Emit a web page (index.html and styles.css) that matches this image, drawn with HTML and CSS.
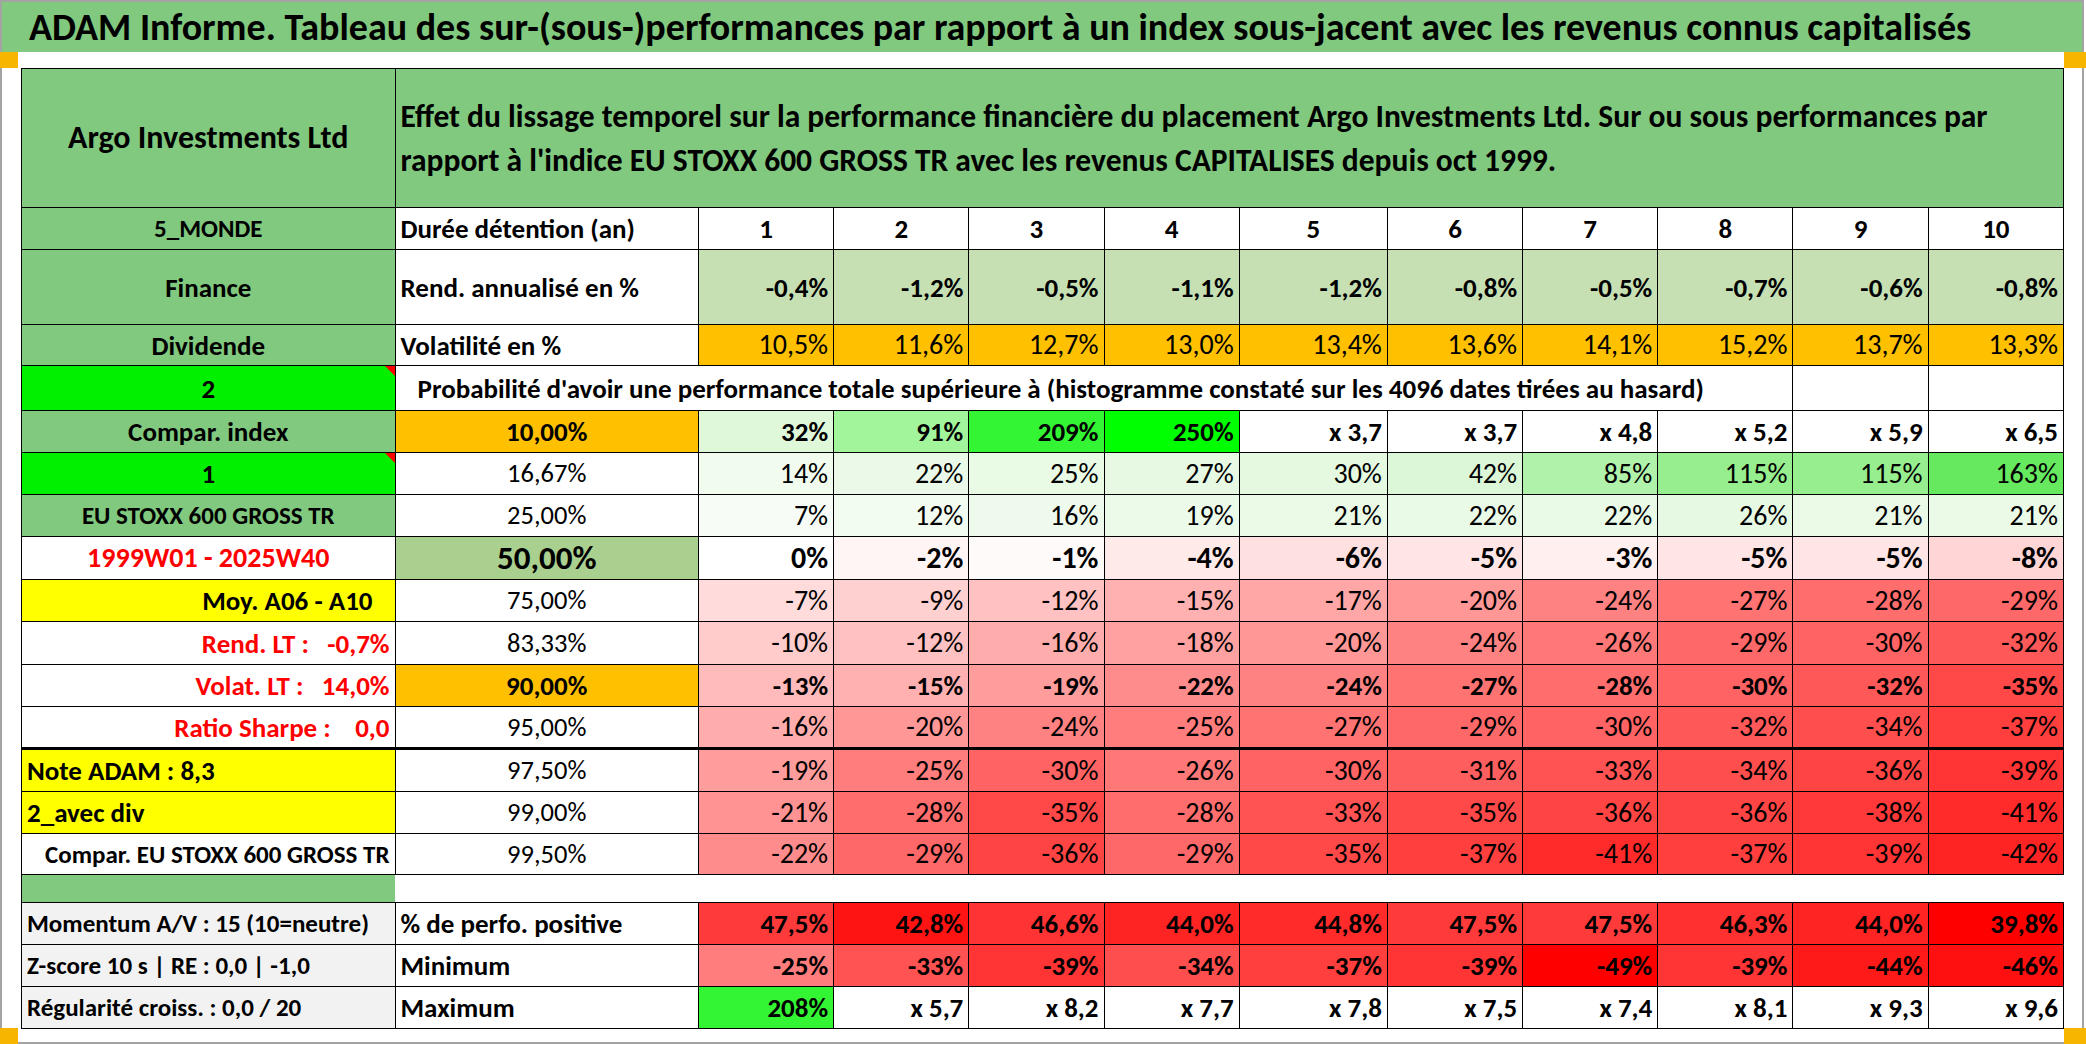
FILE: index.html
```html
<!DOCTYPE html>
<html lang="fr">
<head>
<meta charset="utf-8">
<title>ADAM Informe</title>
<link rel="stylesheet" href="styles.css">
</head>
<body>
<div class="sheet">
  <div class="title">ADAM Informe. Tableau des sur-(sous-)performances par rapport à un index sous-jacent avec les revenus connus capitalisés</div>
  <table class="grid">
    <colgroup>
      <col class="w-label"><col class="w-sub">
      <col class="w-d"><col class="w-d"><col class="w-d"><col class="w-d"><col class="w-d5">
      <col class="w-d"><col class="w-d"><col class="w-d"><col class="w-d"><col class="w-d">
    </colgroup>
    <tr class="h-head">
      <td class="g c b big">Argo Investments Ltd</td>
      <td colspan="11" class="g l b intro">Effet du lissage temporel sur la performance financière du placement Argo Investments Ltd. Sur ou sous performances par<br>rapport à l'indice EU STOXX 600 GROSS TR avec les revenus CAPITALISES depuis oct 1999.</td>
    </tr>
    <tr class="h42">
      <td class="g c b mid">5_MONDE</td>
      <td class="l b">Durée détention (an)</td>
      <td class="c b">1</td><td class="c b">2</td><td class="c b">3</td><td class="c b">4</td><td class="c b">5</td>
      <td class="c b">6</td><td class="c b">7</td><td class="c b">8</td><td class="c b">9</td><td class="c b">10</td>
    </tr>
    <tr class="h75">
      <td class="g c b">Finance</td>
      <td class="l b">Rend. annualisé en %</td>
      <td class="lg r b">-0,4%</td><td class="lg r b">-1,2%</td><td class="lg r b">-0,5%</td><td class="lg r b">-1,1%</td><td class="lg r b">-1,2%</td>
      <td class="lg r b">-0,8%</td><td class="lg r b">-0,5%</td><td class="lg r b">-0,7%</td><td class="lg r b">-0,6%</td><td class="lg r b">-0,8%</td>
    </tr>
    <tr class="h41">
      <td class="g c b">Dividende</td>
      <td class="l b">Volatilité en %</td>
      <td class="or r n">10,5%</td><td class="or r n">11,6%</td><td class="or r n">12,7%</td><td class="or r n">13,0%</td><td class="or r n">13,4%</td>
      <td class="or r n">13,6%</td><td class="or r n">14,1%</td><td class="or r n">15,2%</td><td class="or r n">13,7%</td><td class="or r n">13,3%</td>
    </tr>
    <tr class="h45">
      <td class="bg c b tri">2</td>
      <td colspan="9" class="l b prob">Probabilité d'avoir une performance totale supérieure à (histogramme constaté sur les 4096 dates tirées au hasard)</td>
      <td></td><td></td>
    </tr>
    <tr class="h42">
      <td class="g c b">Compar. index</td>
      <td class="or c b">10,00%</td>
      <td class="r b" style="background:#e0f8da">32%</td><td class="r b" style="background:#a3f59c">91%</td><td class="r b" style="background:#33f533">209%</td><td class="r b" style="background:#00ff00">250%</td>
      <td class="r b">x 3,7</td><td class="r b">x 3,7</td><td class="r b">x 4,8</td><td class="r b">x 5,2</td><td class="r b">x 5,9</td><td class="r b">x 6,5</td>
    </tr>
    <tr class="h42">
      <td class="bg c b tri">1</td>
      <td class="c pc">16,67%</td>
      <td class="r n" style="background:#f1fcef">14%</td><td class="r n" style="background:#ebfae8">22%</td><td class="r n" style="background:#e9fae5">25%</td><td class="r n" style="background:#e7f9e3">27%</td><td class="r n" style="background:#e5f9e1">30%</td>
      <td class="r n" style="background:#dcf7d7">42%</td><td class="r n" style="background:#b1f2aa">85%</td><td class="r n" style="background:#97ee8f">115%</td><td class="r n" style="background:#97ee8f">115%</td><td class="r n" style="background:#66e85f">163%</td>
    </tr>
    <tr class="h42">
      <td class="g c b small">EU STOXX 600 GROSS TR</td>
      <td class="c pc">25,00%</td>
      <td class="r n" style="background:#f7fdf6">7%</td><td class="r n" style="background:#f2fcf0">12%</td><td class="r n" style="background:#eefbec">16%</td><td class="r n" style="background:#ecfbe9">19%</td><td class="r n" style="background:#eafae7">21%</td>
      <td class="r n" style="background:#e9fae6">22%</td><td class="r n" style="background:#e9fae6">22%</td><td class="r n" style="background:#e6f9e3">26%</td><td class="r n" style="background:#eafae7">21%</td><td class="r n" style="background:#eafae7">21%</td>
    </tr>
    <tr class="h43">
      <td class="c b red period">1999W01 - 2025W40</td>
      <td class="mg c b pbig">50,00%</td>
      <td class="r b dbig">0%</td><td class="r b dbig" style="background:#fff5f5">-2%</td><td class="r b dbig" style="background:#fffafa">-1%</td><td class="r b dbig" style="background:#ffeaea">-4%</td><td class="r b dbig" style="background:#ffe0e0">-6%</td>
      <td class="r b dbig" style="background:#ffe5e5">-5%</td><td class="r b dbig" style="background:#ffefef">-3%</td><td class="r b dbig" style="background:#ffe5e5">-5%</td><td class="r b dbig" style="background:#ffe5e5">-5%</td><td class="r b dbig" style="background:#ffd5d5">-8%</td>
    </tr>
    <tr class="h42">
      <td class="ye r b moy">Moy. A06 - A10</td>
      <td class="c pc">75,00%</td>
      <td class="r n" style="background:#ffdbdb">-7%</td><td class="r n" style="background:#ffd0d0">-9%</td><td class="r n" style="background:#ffc1c1">-12%</td><td class="r n" style="background:#ffb1b1">-15%</td><td class="r n" style="background:#ffa7a7">-17%</td>
      <td class="r n" style="background:#ff9797">-20%</td><td class="r n" style="background:#ff8282">-24%</td><td class="r n" style="background:#ff7373">-27%</td><td class="r n" style="background:#ff6d6d">-28%</td><td class="r n" style="background:#ff6868">-29%</td>
    </tr>
    <tr class="h43">
      <td class="r b red">Rend. LT :&nbsp;&nbsp;&nbsp;-0,7%</td>
      <td class="c pc">83,33%</td>
      <td class="r n" style="background:#ffcbcb">-10%</td><td class="r n" style="background:#ffc1c1">-12%</td><td class="r n" style="background:#ffacac">-16%</td><td class="r n" style="background:#ffa1a1">-18%</td><td class="r n" style="background:#ff9797">-20%</td>
      <td class="r n" style="background:#ff8282">-24%</td><td class="r n" style="background:#ff7878">-26%</td><td class="r n" style="background:#ff6868">-29%</td><td class="r n" style="background:#ff6363">-30%</td><td class="r n" style="background:#ff5858">-32%</td>
    </tr>
    <tr class="h42">
      <td class="r b red">Volat. LT :&nbsp;&nbsp;&nbsp;14,0%</td>
      <td class="or c b">90,00%</td>
      <td class="r b" style="background:#ffbbbb">-13%</td><td class="r b" style="background:#ffb1b1">-15%</td><td class="r b" style="background:#ff9c9c">-19%</td><td class="r b" style="background:#ff8c8c">-22%</td><td class="r b" style="background:#ff8282">-24%</td>
      <td class="r b" style="background:#ff7373">-27%</td><td class="r b" style="background:#ff6d6d">-28%</td><td class="r b" style="background:#ff6363">-30%</td><td class="r b" style="background:#ff5858">-32%</td><td class="r b" style="background:#ff4949">-35%</td>
    </tr>
    <tr class="h42 thick">
      <td class="r b red">Ratio Sharpe :&nbsp;&nbsp;&nbsp;&nbsp;0,0</td>
      <td class="c pc">95,00%</td>
      <td class="r n" style="background:#ffacac">-16%</td><td class="r n" style="background:#ff9797">-20%</td><td class="r n" style="background:#ff8282">-24%</td><td class="r n" style="background:#ff7d7d">-25%</td><td class="r n" style="background:#ff7373">-27%</td>
      <td class="r n" style="background:#ff6868">-29%</td><td class="r n" style="background:#ff6363">-30%</td><td class="r n" style="background:#ff5858">-32%</td><td class="r n" style="background:#ff4e4e">-34%</td><td class="r n" style="background:#ff3e3e">-37%</td>
    </tr>
    <tr class="h43">
      <td class="ye l b">Note ADAM : 8,3</td>
      <td class="c pc">97,50%</td>
      <td class="r n" style="background:#ff9c9c">-19%</td><td class="r n" style="background:#ff7d7d">-25%</td><td class="r n" style="background:#ff6363">-30%</td><td class="r n" style="background:#ff7878">-26%</td><td class="r n" style="background:#ff6363">-30%</td>
      <td class="r n" style="background:#ff5e5e">-31%</td><td class="r n" style="background:#ff5353">-33%</td><td class="r n" style="background:#ff4e4e">-34%</td><td class="r n" style="background:#ff4444">-36%</td><td class="r n" style="background:#ff3434">-39%</td>
    </tr>
    <tr class="h42">
      <td class="ye l b">2_avec div</td>
      <td class="c pc">99,00%</td>
      <td class="r n" style="background:#ff9292">-21%</td><td class="r n" style="background:#ff6d6d">-28%</td><td class="r n" style="background:#ff4949">-35%</td><td class="r n" style="background:#ff6d6d">-28%</td><td class="r n" style="background:#ff5353">-33%</td>
      <td class="r n" style="background:#ff4949">-35%</td><td class="r n" style="background:#ff4444">-36%</td><td class="r n" style="background:#ff4444">-36%</td><td class="r n" style="background:#ff3939">-38%</td><td class="r n" style="background:#ff2a2a">-41%</td>
    </tr>
    <tr class="h41">
      <td class="r b small">Compar. EU STOXX 600 GROSS TR</td>
      <td class="c pc">99,50%</td>
      <td class="r n" style="background:#ff8c8c">-22%</td><td class="r n" style="background:#ff6868">-29%</td><td class="r n" style="background:#ff4444">-36%</td><td class="r n" style="background:#ff6868">-29%</td><td class="r n" style="background:#ff4949">-35%</td>
      <td class="r n" style="background:#ff3e3e">-37%</td><td class="r n" style="background:#ff2a2a">-41%</td><td class="r n" style="background:#ff3e3e">-37%</td><td class="r n" style="background:#ff3434">-39%</td><td class="r n" style="background:#ff2424">-42%</td>
    </tr>
    <tr class="h28">
      <td class="g gap"></td>
      <td colspan="11" class="void"></td>
    </tr>
    <tr class="h42">
      <td class="gr l b stat">Momentum A/V : 15 (10=neutre)</td>
      <td class="l b">% de perfo. positive</td>
      <td class="r b" style="background:#ff3a3a">47,5%</td><td class="r b" style="background:#ff1414">42,8%</td><td class="r b" style="background:#ff3333">46,6%</td><td class="r b" style="background:#ff2424">44,0%</td><td class="r b" style="background:#ff2b2b">44,8%</td>
      <td class="r b" style="background:#ff3a3a">47,5%</td><td class="r b" style="background:#ff3a3a">47,5%</td><td class="r b" style="background:#ff3030">46,3%</td><td class="r b" style="background:#ff2424">44,0%</td><td class="r b" style="background:#ff0000">39,8%</td>
    </tr>
    <tr class="h42">
      <td class="gr l b stat">Z-score 10 s | RE : 0,0 | -1,0</td>
      <td class="l b">Minimum</td>
      <td class="r b" style="background:#ff7d7d">-25%</td><td class="r b" style="background:#ff5353">-33%</td><td class="r b" style="background:#ff3434">-39%</td><td class="r b" style="background:#ff4e4e">-34%</td><td class="r b" style="background:#ff3e3e">-37%</td>
      <td class="r b" style="background:#ff3434">-39%</td><td class="r b" style="background:#ff0000">-49%</td><td class="r b" style="background:#ff3434">-39%</td><td class="r b" style="background:#ff1a1a">-44%</td><td class="r b" style="background:#ff1010">-46%</td>
    </tr>
    <tr class="h42">
      <td class="gr l b stat">Régularité croiss. : 0,0 / 20</td>
      <td class="l b">Maximum</td>
      <td class="r b" style="background:#33f533">208%</td><td class="r b">x 5,7</td><td class="r b">x 8,2</td><td class="r b">x 7,7</td><td class="r b">x 7,8</td>
      <td class="r b">x 7,5</td><td class="r b">x 7,4</td><td class="r b">x 8,1</td><td class="r b">x 9,3</td><td class="r b">x 9,6</td>
    </tr>
  </table>
  <span class="handle h-tl"></span>
  <span class="handle h-tr"></span>
  <span class="handle h-bl"></span>
  <span class="handle h-br"></span>
</div>
</body>
</html>
```

FILE: styles.css
```css
html, body {
  margin: 0;
  padding: 0;
  background: #ffffff;
}

body {
  font-family: Carlito, Lato, "Liberation Sans", sans-serif;
  color: #000;
}

.sheet {
  position: relative;
  width: 2084px;
  height: 1044px;
  box-sizing: border-box;
  border: 2px solid #a3a3a3;
  background: #fff;
}

.title {
  height: 50px;
  background: #80c97f;
  font-size: 38px;
  font-weight: 700;
  line-height: 50px;
  padding-left: 27px;
  white-space: nowrap;
  overflow: hidden;
}

.grid {
  margin: 16px 0 0 19px;
  border-collapse: collapse;
  table-layout: fixed;
  width: 2043px;
}

.w-label { width: 373px; }
.w-sub { width: 303px; }
.w-d { width: 135px; }
.w-d5 { width: 148px; }

.grid td {
  border: 1px solid #000;
  padding: 0 5px;
  font-size: 27px;
  line-height: 1;
  white-space: nowrap;
  overflow: hidden;
  vertical-align: middle;
}

.h-head { height: 139px; }
.h42 { height: 42px; }
.h41 { height: 41px; }
.h43 { height: 43px; }
.h45 { height: 45px; }
.h75 { height: 75px; }
.h28 { height: 28px; }

.l { text-align: left; }
.r { text-align: right; }
.c { text-align: center; }
.b { font-weight: 700; }

.g { background: #80c97f; }
.lg { background: #c6e0b4; }
.or { background: #ffc000; }
.bg { background: #00f000; }
.ye { background: #ffff00; }
.gr { background: #f2f2f2; }
.mg { background: #a9d08e; }

.red { color: #ff0000; }

.grid .n { font-size: 28px; }
.grid .big { font-size: 32px; }
.grid .mid { font-size: 25px; }
.grid .small { font-size: 25px; }
.grid .period { font-size: 28px; }
.grid .pc { font-size: 26.5px; }
.grid .pbig { font-size: 33px; }
.grid .dbig { font-size: 30px; }
.grid .stat { font-size: 25px; }
.grid .moy { padding-right: 22px; }

.grid .intro {
  font-size: 31.5px;
  line-height: 44px;
  padding-left: 5px;
}

.grid .prob {
  padding-left: 22px;
  font-size: 27px;
}

.tri { position: relative; }
.tri::after {
  content: "";
  position: absolute;
  top: 0;
  right: 0;
  border-top: 10px solid #ff0000;
  border-left: 10px solid transparent;
}

.thick td { border-bottom: 3px solid #000; }

.grid .gap { border-right: none; }
.grid .void { border-left: none; border-right: none; border-bottom: none; }

.handle {
  position: absolute;
  width: 18px;
  height: 16px;
  background: #f7b500;
}
.h-tl { left: -2px; top: 50px; }
.h-tr { left: 2062px; top: 50px; width: 22px; }
.h-bl { left: -2px; top: 1026px; }
.h-br { left: 2062px; top: 1026px; width: 22px; }
```
